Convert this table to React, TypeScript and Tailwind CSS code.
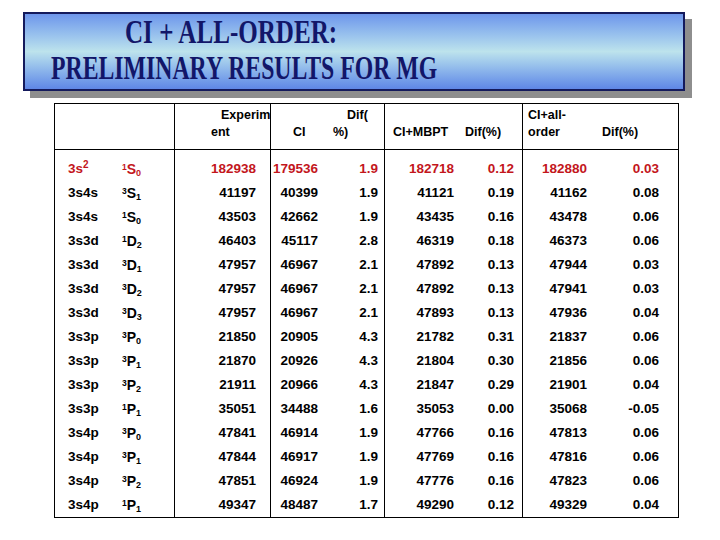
import React from "react";

type Row = {
  conf: string;
  sup: string;
  term: string;
  sub: string;
  exp: string;
  ci: string;
  ciDif: string;
  mbpt: string;
  mbptDif: string;
  all: string;
  allDif: string;
};

const rows: Row[] = [
  { conf: "3s", sup: "1", term: "S", sub: "0", exp: "182938", ci: "179536", ciDif: "1.9", mbpt: "182718", mbptDif: "0.12", all: "182880", allDif: "0.03" },
  { conf: "3s4s", sup: "3", term: "S", sub: "1", exp: "41197", ci: "40399", ciDif: "1.9", mbpt: "41121", mbptDif: "0.19", all: "41162", allDif: "0.08" },
  { conf: "3s4s", sup: "1", term: "S", sub: "0", exp: "43503", ci: "42662", ciDif: "1.9", mbpt: "43435", mbptDif: "0.16", all: "43478", allDif: "0.06" },
  { conf: "3s3d", sup: "1", term: "D", sub: "2", exp: "46403", ci: "45117", ciDif: "2.8", mbpt: "46319", mbptDif: "0.18", all: "46373", allDif: "0.06" },
  { conf: "3s3d", sup: "3", term: "D", sub: "1", exp: "47957", ci: "46967", ciDif: "2.1", mbpt: "47892", mbptDif: "0.13", all: "47944", allDif: "0.03" },
  { conf: "3s3d", sup: "3", term: "D", sub: "2", exp: "47957", ci: "46967", ciDif: "2.1", mbpt: "47892", mbptDif: "0.13", all: "47941", allDif: "0.03" },
  { conf: "3s3d", sup: "3", term: "D", sub: "3", exp: "47957", ci: "46967", ciDif: "2.1", mbpt: "47893", mbptDif: "0.13", all: "47936", allDif: "0.04" },
  { conf: "3s3p", sup: "3", term: "P", sub: "0", exp: "21850", ci: "20905", ciDif: "4.3", mbpt: "21782", mbptDif: "0.31", all: "21837", allDif: "0.06" },
  { conf: "3s3p", sup: "3", term: "P", sub: "1", exp: "21870", ci: "20926", ciDif: "4.3", mbpt: "21804", mbptDif: "0.30", all: "21856", allDif: "0.06" },
  { conf: "3s3p", sup: "3", term: "P", sub: "2", exp: "21911", ci: "20966", ciDif: "4.3", mbpt: "21847", mbptDif: "0.29", all: "21901", allDif: "0.04" },
  { conf: "3s3p", sup: "1", term: "P", sub: "1", exp: "35051", ci: "34488", ciDif: "1.6", mbpt: "35053", mbptDif: "0.00", all: "35068", allDif: "-0.05" },
  { conf: "3s4p", sup: "3", term: "P", sub: "0", exp: "47841", ci: "46914", ciDif: "1.9", mbpt: "47766", mbptDif: "0.16", all: "47813", allDif: "0.06" },
  { conf: "3s4p", sup: "3", term: "P", sub: "1", exp: "47844", ci: "46917", ciDif: "1.9", mbpt: "47769", mbptDif: "0.16", all: "47816", allDif: "0.06" },
  { conf: "3s4p", sup: "3", term: "P", sub: "2", exp: "47851", ci: "46924", ciDif: "1.9", mbpt: "47776", mbptDif: "0.16", all: "47823", allDif: "0.06" },
  { conf: "3s4p", sup: "1", term: "P", sub: "1", exp: "49347", ci: "48487", ciDif: "1.7", mbpt: "49290", mbptDif: "0.12", all: "49329", allDif: "0.04" },
];

// first row (ground state) is printed in red
const rowColor = (i: number) => (i === 0 ? "text-[#c3161c]" : "text-black");

const App = () => {
  return (
    <div className="w-[720px] h-[540px] bg-white overflow-hidden font-['Liberation_Sans',Arial,sans-serif]">
      {/* title banner */}
      <div className="ml-[23px] mt-[12px] w-[662px] h-[79px] border-2 border-[#141a5c] shadow-[7px_7px_0_#8e8e8e] bg-linear-to-b from-[#6e96eb] via-[#bde3ec] to-[#5f86e6]">
        <div className="font-['Liberation_Serif','DejaVu_Serif',serif] text-[33px] leading-[36px] font-bold text-[#121669] uppercase whitespace-nowrap">
          <div className="pl-[100px]">
            <span className="inline-block origin-left scale-x-[0.76]">CI + ALL-ORDER:</span>
          </div>
          <div className="pl-[26px]">
            <span className="inline-block origin-left scale-x-[0.72]">Preliminary Results for MG</span>
          </div>
        </div>
      </div>

      {/* data table */}
      <div className="ml-[54px] mt-[12px] w-[625px] flex border border-black font-bold text-[13.5px]">
        {/* configuration / term */}
        <div className="w-[120px] border-r border-black">
          <div className="h-[46px] border-b border-black" />
          <div className="pt-[7px]">
            {rows.map((r, i) => (
              <div key={i} className={`flex h-[24px] leading-[24px] ${rowColor(i)}`}>
                <span className="w-[67px] pl-[13px]">
                  {r.conf}
                  {i === 0 && <sup className="text-[10px]">2</sup>}
                </span>
                <span>
                  <sup className="text-[8.5px]">{r.sup}</sup>
                  <span className="text-[14px]">{r.term}</span>
                  <sub className="text-[9px]">{r.sub}</sub>
                </span>
              </div>
            ))}
          </div>
        </div>

        {/* experiment */}
        <div className="w-[96px] border-r border-black">
          <div className="h-[46px] border-b border-black pt-[3px] text-[12.5px] leading-[17px]">
            <div className="pl-[46px]">Experim</div>
            <div className="pl-[36px]">ent</div>
          </div>
          <div className="pt-[7px]">
            {rows.map((r, i) => (
              <div key={i} className={`h-[24px] leading-[24px] text-right pr-[14px] ${rowColor(i)}`}>
                {r.exp}
              </div>
            ))}
          </div>
        </div>

        {/* CI */}
        <div className="w-[114px] border-r border-black">
          <div className="h-[46px] border-b border-black pt-[3px] text-[12.5px] leading-[17px]">
            <div className="pl-[76px]">Dif(</div>
            <div className="flex">
              <span className="w-[62px] pl-[22px]">CI</span>
              <span>%)</span>
            </div>
          </div>
          <div className="pt-[7px]">
            {rows.map((r, i) => (
              <div key={i} className={`flex h-[24px] leading-[24px] ${rowColor(i)}`}>
                <span className="w-[55px] text-right pr-[8px]">{r.ci}</span>
                <span className="flex-1 text-right pr-[6px]">{r.ciDif}</span>
              </div>
            ))}
          </div>
        </div>

        {/* CI+MBPT */}
        <div className="w-[138px] border-r border-black">
          <div className="h-[46px] border-b border-black pt-[20px] text-[12.5px] leading-[17px]">
            <div className="flex">
              <span className="w-[80px] pl-[8px]">CI+MBPT</span>
              <span>Dif(%)</span>
            </div>
          </div>
          <div className="pt-[7px]">
            {rows.map((r, i) => (
              <div key={i} className={`flex h-[24px] leading-[24px] ${rowColor(i)}`}>
                <span className="w-[76px] text-right pr-[7px]">{r.mbpt}</span>
                <span className="flex-1 text-right pr-[8px]">{r.mbptDif}</span>
              </div>
            ))}
          </div>
        </div>

        {/* CI+all-order */}
        <div className="w-[155px]">
          <div className="h-[46px] border-b border-black pt-[3px] text-[12.5px] leading-[17px]">
            <div className="pl-[5px]">CI+all-</div>
            <div className="flex">
              <span className="w-[79px] pl-[5px]">order</span>
              <span>Dif(%)</span>
            </div>
          </div>
          <div className="pt-[7px]">
            {rows.map((r, i) => (
              <div key={i} className={`flex h-[24px] leading-[24px] ${rowColor(i)}`}>
                <span className="w-[72px] text-right pr-[8px]">{r.all}</span>
                <span className="flex-1 text-right pr-[19px]">{r.allDif}</span>
              </div>
            ))}
          </div>
        </div>
      </div>
    </div>
  );
};

export default App;
